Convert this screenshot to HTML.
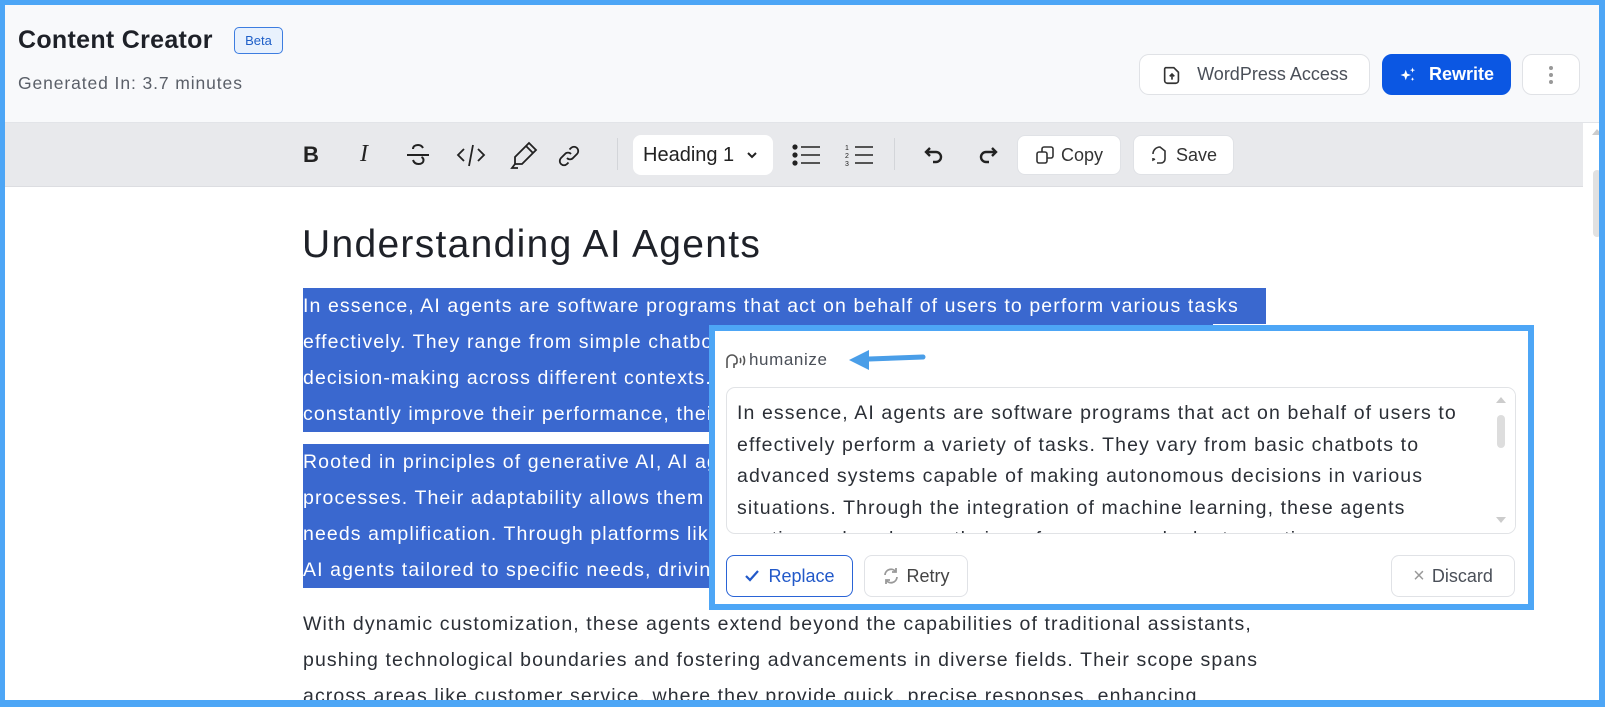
<!DOCTYPE html>
<html><head><meta charset="utf-8"><style>
*{box-sizing:border-box;margin:0;padding:0}
body{width:1605px;height:707px;overflow:hidden;background:#4da6f6;font-family:"Liberation Sans",sans-serif;position:relative}
.frame{position:absolute;left:5px;top:5px;width:1594px;height:695px;background:#fff;overflow:hidden}
.abs{position:absolute}
.hdr{left:0;top:0;width:1594px;height:118px;background:#f8f9fb;border-bottom:1px solid #e2e4e8}
.tb{left:0;top:118px;width:1578px;height:64px;background:#e8e9ec;border-bottom:1px solid #dcdde1}
.btn{position:absolute;background:#fff;border:1px solid #e0e2e6;border-radius:8px;display:flex;align-items:center;justify-content:center;font-size:18px;color:#3b3f46}
.ic{position:absolute;color:#222}
.p{position:absolute;left:298px;font-size:19.5px;letter-spacing:1.1px;color:#2b2f36;white-space:nowrap;line-height:36px}
.hl{position:absolute;background:#3a68cf}
.hp{position:absolute;left:298px;font-size:19.5px;letter-spacing:1.1px;color:#fff;white-space:nowrap;line-height:36px}
</style></head><body>
<div class="frame">
<div class="abs hdr"></div>
<div class="abs" style="left:13px;top:21px;font-size:25px;font-weight:bold;color:#1e2128;letter-spacing:0.3px">Content Creator</div>
<div class="abs" style="left:229px;top:22px;width:49px;height:27px;border:1px solid #3d7de0;background:#e8f1fd;border-radius:5px;font-size:13px;color:#1f5fc8;display:flex;align-items:center;justify-content:center">Beta</div>
<div class="abs" style="left:13px;top:68px;font-size:17.5px;letter-spacing:0.9px;color:#5a5f68">Generated In: 3.7 minutes</div>

<div class="btn" style="left:1134px;top:49px;width:231px;height:41px;border-radius:10px;color:#4a4f58">
<svg width="22" height="22" viewBox="0 0 24 24" fill="none" stroke="#333" stroke-width="1.8" style="margin-right:14px"><path d="M5 4h9l5 5v9a3 3 0 0 1-3 3H7a3 3 0 0 1-3-3V6a2 2 0 0 1 1-2z"/><path d="M12 17v-6M9.5 13.5 12 11l2.5 2.5"/></svg>WordPress Access</div>
<div class="btn" style="left:1377px;top:49px;width:129px;height:41px;border-radius:10px;background:#0b57e3;border-color:#0b57e3;color:#fff;font-weight:bold">
<svg width="18" height="18" viewBox="0 0 24 24" fill="#fff" style="margin-right:12px"><path d="M9 5l1.8 5.2L16 12l-5.2 1.8L9 19l-1.8-5.2L2 12l5.2-1.8z"/><path d="M18 2l.9 2.6 2.6.9-2.6.9L18 9l-.9-2.6-2.6-.9 2.6-.9zM18 15l.7 1.8 1.8.7-1.8.7L18 20l-.7-1.8-1.8-.7 1.8-.7z"/></svg>Rewrite</div>
<div class="btn" style="left:1517px;top:49px;width:58px;height:41px;border-radius:10px;color:#999;font-size:20px;line-height:1"><svg width="6" height="20"><circle cx="3" cy="3" r="2" fill="#999"/><circle cx="3" cy="10" r="2" fill="#999"/><circle cx="3" cy="17" r="2" fill="#999"/></svg></div>

<div class="abs tb"></div>
<div class="ic" style="left:298px;top:137px;font-size:22px;font-weight:bold">B</div>
<div class="ic" style="left:355px;top:136px;font-size:24px;font-style:italic;font-family:'Liberation Serif',serif">I</div>
<svg class="ic" style="left:399px;top:137px" width="28" height="26" viewBox="0 0 28 26" fill="none" stroke="#222" stroke-width="2"><path d="M19 6c-1-2-3-3-5-3-3 0-5 1.5-5 4M9 18c1 3 3 4 5.5 4 3 0 5-1.5 5-4 0-1.5-1-2.5-2-3"/><path d="M3 13h22"/></svg>
<svg class="ic" style="left:451px;top:137px" width="30" height="26" viewBox="0 0 30 26" fill="none" stroke="#222" stroke-width="1.8"><path d="M8 7l-6 6 6 6M22 7l6 6-6 6M17 3l-4 21"/></svg>
<svg class="ic" style="left:504px;top:135px" width="30" height="30" viewBox="0 0 30 30" fill="none" stroke="#222" stroke-width="1.8"><path d="M20 3l7 7-14 14H6v-7z"/><path d="M17 6l7 7"/><path d="M6 24l-3 4h6"/></svg>
<svg class="ic" style="left:552px;top:139px" width="24" height="24" viewBox="0 0 24 24" fill="none" stroke="#222" stroke-width="1.8"><path d="M10 14a4 4 0 0 0 6 0l4-4a4 4 0 0 0-6-6l-1.5 1.5"/><path d="M14 10a4 4 0 0 0-6 0l-4 4a4 4 0 0 0 6 6l1.5-1.5"/></svg>
<div class="abs" style="left:612px;top:133px;width:1px;height:32px;background:#d3d5d9"></div>
<div class="btn" style="left:628px;top:130px;width:140px;height:40px;border:none;font-size:20px;color:#222;justify-content:flex-start;padding-left:10px">Heading 1<svg width="12" height="8" style="margin-left:12px" viewBox="0 0 12 8" fill="none" stroke="#222" stroke-width="2"><path d="M2 2l4 4 4-4"/></svg></div>
<svg class="ic" style="left:787px;top:138px" width="30" height="24" viewBox="0 0 30 24" fill="none" stroke="#222" stroke-width="1.6"><circle cx="3" cy="4" r="1.8" fill="#222"/><circle cx="3" cy="12" r="1.8" fill="#222"/><circle cx="3" cy="20" r="1.8" fill="#222"/><path d="M9 4h19M9 12h19M9 20h19"/></svg>
<svg class="ic" style="left:840px;top:138px" width="30" height="24" viewBox="0 0 30 24" fill="none" stroke="#222" stroke-width="1.6"><path d="M10 4h18M10 12h18M10 20h18"/><text x="0" y="7" font-size="7" fill="#222" stroke="none" font-family="Liberation Sans">1</text><text x="0" y="15" font-size="7" fill="#222" stroke="none" font-family="Liberation Sans">2</text><text x="0" y="23" font-size="7" fill="#222" stroke="none" font-family="Liberation Sans">3</text></svg>
<div class="abs" style="left:889px;top:133px;width:1px;height:32px;background:#d3d5d9"></div>
<svg class="ic" style="left:918px;top:140px" width="24" height="20" viewBox="0 0 24 20" fill="none" stroke="#222" stroke-width="2.4"><path d="M7 3L3 7l4 4"/><path d="M3 7h10a5 5 0 0 1 0 10h-3"/></svg>
<svg class="ic" style="left:970px;top:140px" width="24" height="20" viewBox="0 0 24 20" fill="none" stroke="#222" stroke-width="2.4"><path d="M17 3l4 4-4 4"/><path d="M21 7H11a5 5 0 0 0 0 10h3"/></svg>
<div class="btn" style="left:1012px;top:130px;width:104px;height:40px;font-size:18px;color:#333"><svg width="20" height="20" viewBox="0 0 20 20" fill="none" stroke="#333" stroke-width="1.6" style="margin-right:6px"><rect x="2" y="7" width="10" height="11" rx="2"/><path d="M7 7V4a2 2 0 0 1 2-2h7a2 2 0 0 1 2 2v7a2 2 0 0 1-2 2h-4"/></svg>Copy</div>
<div class="btn" style="left:1128px;top:130px;width:101px;height:40px;font-size:18px;color:#333"><svg width="20" height="20" viewBox="0 0 20 20" fill="none" stroke="#333" stroke-width="1.6" style="margin-right:6px"><path d="M3 9a7 7 0 0 1 7-7l5 4v8a4 4 0 0 1-4 4H7"/><path d="M3 13v2l2-1"/></svg>Save</div>

<div class="abs" style="left:1580px;top:118px;width:14px;height:577px;background:#fff"></div>
<div class="abs" style="left:1587px;top:124px;width:0;height:0;border-left:5px solid transparent;border-right:5px solid transparent;border-bottom:6px solid #ccc"></div>
<div class="abs" style="left:1588px;top:165px;width:8px;height:67px;background:#e1e1e1;border-radius:4px"></div>

<div class="abs" style="left:297px;top:218px;font-size:39px;letter-spacing:1.3px;color:#1e2128">Understanding AI Agents</div>

<div class="hl" style="left:298px;top:283px;width:963px;height:36px"></div>
<div class="hl" style="left:298px;top:319px;width:910px;height:108px"></div>
<div class="hl" style="left:298px;top:439px;width:910px;height:144px"></div>
<div class="hp" style="top:283px">In essence, AI agents are software programs that act on behalf of users to perform various tasks<br>effectively. They range from simple chatbots to advanced systems capable of autonomous<br>decision-making across different contexts. Through the integration of machine learning, they<br>constantly improve their performance, their adaptability continuously.</div>
<div class="hp" style="top:439px">Rooted in principles of generative AI, AI agents streamline workflows and automate complex<br>processes. Their adaptability allows them to handle a wide range of tasks where human<br>needs amplification. Through platforms like these, organizations can build and deploy<br>AI agents tailored to specific needs, driving efficiency and innovation.</div>
<div class="p" style="top:601px">With dynamic customization, these agents extend beyond the capabilities of traditional assistants,<br>pushing technological boundaries and fostering advancements in diverse fields. Their scope spans<br>across areas like customer service, where they provide quick, precise responses, enhancing</div>

<div class="abs" style="left:704px;top:320px;width:825px;height:285px;border:6px solid #4da6f6;background:#fff">
<svg class="abs" style="left:10px;top:21px" width="22" height="18" viewBox="0 0 22 18" fill="none" stroke="#555" stroke-width="1.6"><path d="M2 16V8a5 5 0 0 1 10 0v2a2 2 0 0 1-2 2h-1v4"/><path d="M15 6c1 1 1 4 0 5M18 4c2 2 2 7 0 9"/></svg>
<div class="abs" style="left:34px;top:19px;font-size:17px;letter-spacing:0.6px;color:#4a4f58">humanize</div>
<svg class="abs" style="left:132px;top:17px" width="80" height="24" viewBox="0 0 80 24"><path d="M76 9 L22 11" stroke="#4a9ee8" stroke-width="5" stroke-linecap="round"/><path d="M2 12 L22 2 L22 22 Z" fill="#4a9ee8"/></svg>
<div class="abs" style="left:11px;top:56px;width:790px;height:147px;border:1px solid #e1e3e6;border-radius:9px;overflow:hidden">
<div class="abs" style="left:10px;top:10px;font-size:19.5px;letter-spacing:1.1px;line-height:31.5px;color:#2b2f36;white-space:nowrap">In essence, AI agents are software programs that act on behalf of users to<br>effectively perform a variety of tasks. They vary from basic chatbots to<br>advanced systems capable of making autonomous decisions in various<br>situations. Through the integration of machine learning, these agents<br>continuously enhance their performance and adapt over time.</div>
<div class="abs" style="left:760px;top:0;width:28px;height:145px;background:#fff"></div>
<div class="abs" style="left:769px;top:9px;border-left:5px solid transparent;border-right:5px solid transparent;border-bottom:6px solid #ccc"></div>
<div class="abs" style="left:770px;top:27px;width:8px;height:33px;background:#ddd;border-radius:4px"></div>
<div class="abs" style="left:769px;top:129px;border-left:5px solid transparent;border-right:5px solid transparent;border-top:6px solid #ccc"></div>
</div>
<div class="btn" style="left:11px;top:224px;width:127px;height:42px;border:1.5px solid #2a64d6;color:#2259c9;font-size:18px"><svg width="16" height="14" viewBox="0 0 16 14" fill="none" stroke="#2259c9" stroke-width="2.2" style="margin-right:8px"><path d="M2 7l4 4 8-9"/></svg>Replace</div>
<div class="btn" style="left:149px;top:224px;width:104px;height:42px;font-size:18px;color:#444"><svg width="18" height="18" viewBox="0 0 18 18" fill="none" stroke="#999" stroke-width="1.8" style="margin-right:6px"><path d="M3 8a6 6 0 0 1 11-3M15 10a6 6 0 0 1-11 3"/><path d="M14 1v4h-4M4 17v-4h4"/></svg>Retry</div>
<div class="btn" style="left:676px;top:224px;width:124px;height:42px;font-size:18px;color:#4a4f58"><span style="color:#999;margin-right:7px;font-size:20px">×</span>Discard</div>
</div>
</div>
</body></html>
